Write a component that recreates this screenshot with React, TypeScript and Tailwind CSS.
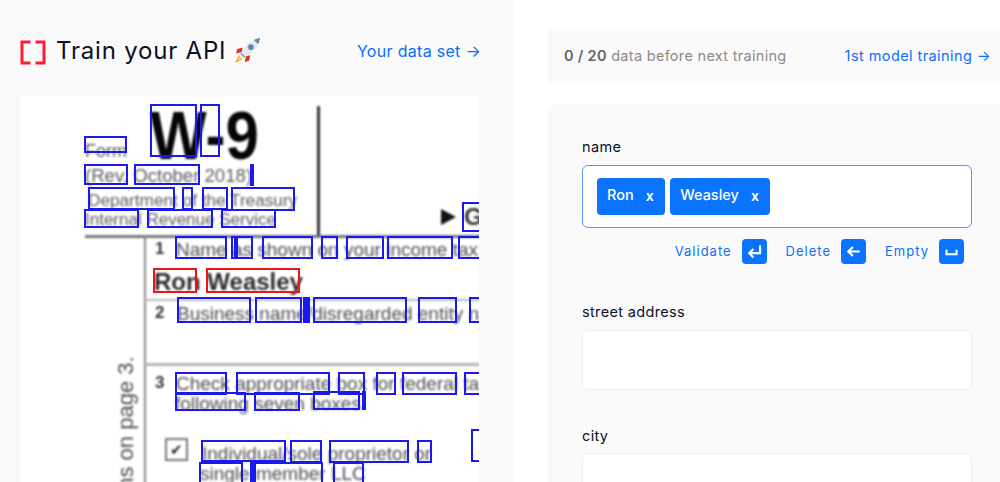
import React from "react";

const OX = 20;
const OY = 96;
const blue: number[][] = [
  [150,104,197,157],[200,104,220,157],[84,136,127,153],[84,164,128,185],[134,164,200,185],[250,164,252,186],
  [88,187,175,210],[182,187,193,210],[202,187,228,210],[231,187,295,211],
  [84,209,139,228],[147,209,213,228],[221,209,276,228],[462,202,482,232],
  [175,236,227,259],[231,236,236,259],[236,236,253,259],[262,236,313,259],[321,236,338,259],[346,236,384,259],[387,236,453,259],[458,236,482,259],
  [177,297,251,323],[255,297,302,323],[303,297,305,323],[306,297,309,323],[313,297,407,323],[418,297,457,323],[469,297,482,323],
  [175,372,227,395],[236,372,330,395],[338,372,365,395],[376,372,396,395],[402,372,457,395],[464,372,482,395],
  [175,392,246,411],[254,392,300,411],[313,391,360,410],[362,391,364,410],
  [201,440,286,462],[290,440,322,463],[329,440,409,463],[417,440,432,463],[471,429,482,462],
  [199,462,243,490],[250,462,254,490],[254,462,323,490],[333,462,364,490],
];
const red: number[][] = [[153,268,197,293],[206,268,300,293]];

const lines: { t: string; x: number; y: number; s: number; c: string; b?: boolean }[] = [
  { t: "Form", x: 85, y: 142, s: 18, c: "#5c5c5c" },
  { t: "(Rev. October 2018)", x: 85, y: 167, s: 18.6, c: "#5c5c5c" },
  { t: "Department of the Treasury", x: 88, y: 192, s: 17.2, c: "#5c5c5c" },
  { t: "Internal Revenue Service", x: 85, y: 211, s: 17, c: "#5c5c5c" },
  { t: "G", x: 464, y: 205, s: 24, c: "#333", b: true },
  { t: "1", x: 155, y: 240, s: 17, c: "#333", b: true },
  { t: "Name as shown on your income tax", x: 176, y: 240, s: 19, c: "#4f4f4f" },
  { t: "Ron Weasley", x: 154, y: 270, s: 24, c: "#2b2b2b", b: true },
  { t: "2", x: 155, y: 304, s: 17, c: "#333", b: true },
  { t: "Business name/disregarded entity name", x: 177, y: 304, s: 19, c: "#4f4f4f" },
  { t: "3", x: 155, y: 374, s: 17, c: "#333", b: true },
  { t: "Check appropriate box for federal tax", x: 176, y: 374, s: 19, c: "#4f4f4f" },
  { t: "following seven boxes.", x: 175, y: 394, s: 19, c: "#4f4f4f" },
  { t: "Individual/sole proprietor or", x: 202, y: 444, s: 19, c: "#4f4f4f" },
  { t: "single-member LLC", x: 200, y: 464, s: 19, c: "#4f4f4f" },
];

const rules: { x: number; y: number; w: number; h: number; c: string }[] = [
  { x: 317, y: 106, w: 3, h: 130, c: "#333" },
  { x: 85, y: 235, w: 397, h: 3, c: "#777" },
  { x: 144, y: 236, w: 2, h: 250, c: "#888" },
  { x: 145, y: 299, w: 340, h: 2, c: "#bbb" },
  { x: 145, y: 363, w: 340, h: 3, c: "#b5b5b5" },
];

function Rocket() {
  return (
    <svg width="27" height="27" viewBox="0 0 28 28" className="-mt-[1px] shrink-0">
      <path d="M5 19 L1 27 L9 23 Z" fill="#f6a623" />
      <path d="M6 20 L3.6 24.6 L8 22.4 Z" fill="#ffe25a" />
      <path d="M9 11 L3.5 12.5 L2 17 L8 15.5 Z" fill="#d9332f" />
      <path d="M17 19 L15.5 24.5 L11 26 L12.5 20 Z" fill="#d9332f" />
      <path d="M7.5 16 L12 20.5 C18 17 23 12.5 25 7.5 L20.5 3 C15.5 5 11 10 7.5 16 Z" fill="#e6eaee" />
      <path d="M20.5 3 L25 7.5 C26.4 4.4 27 2.4 27 1 C25.6 1 23.6 1.6 20.5 3 Z" fill="#6f8ba0" />
      <circle cx="17.5" cy="10.5" r="3" fill="#4f86b8" stroke="#a8b5bf" strokeWidth="1" />
      <path d="M7.5 16 L12 20.5 L10.5 21.5 L6.5 17.5 Z" fill="#8d99a3" />
    </svg>
  );
}

function Logo() {
  return (
    <svg width="26" height="25" viewBox="0 0 26 25" className="mt-[3px] shrink-0">
      <path d="M10.5 2 H2 V23 H10.5 M15.5 2 H24 V23 H15.5" fill="none" stroke="#ff1a35" strokeWidth="3" />
    </svg>
  );
}

function Doc() {
  return (
    <div className="relative flex-1 overflow-hidden bg-white font-['Liberation_Sans',sans-serif]">
      <div className="absolute inset-0 blur-[0.9px]">
        {rules.map((r, i) => (
          <div key={i} className="absolute" style={{ left: r.x - OX, top: r.y - OY, width: r.w, height: r.h, background: r.c }} />
        ))}
        <div className="absolute left-[130px] top-[5px] origin-top scale-y-[1.15] whitespace-nowrap text-[60px] font-bold leading-none text-[#050505]">
          W-9
        </div>
        {lines.map((l, i) => (
          <div
            key={i}
            className={`absolute whitespace-nowrap leading-none ${l.b ? "font-bold" : "font-normal"}`}
            style={{ left: l.x - OX, top: l.y - OY, fontSize: l.s, color: l.c }}
          >
            {l.t}
          </div>
        ))}
        <div className="absolute left-[145px] top-[342px] h-[23px] w-[23px] border-2 border-[#777] text-center text-[15px] leading-[19px] text-[#222]">
          ✔
        </div>
        <div className="absolute left-[95px] top-[483px] origin-top-left whitespace-nowrap text-[22px] leading-none text-[#4f4f4f]" style={{ transform: "rotate(-90deg)" }}>
          Instructions on page 3.
        </div>
        <div className="absolute left-[421px] top-[113px] h-0 w-0 border-y-[8px] border-l-[15px] border-y-transparent border-l-[#111]" />
      </div>
      {blue.map((b, i) => (
        <div key={i} className="absolute border-2 border-[#1a1aee]" style={{ left: b[0] - OX, top: b[1] - OY, width: b[2] - b[0], height: b[3] - b[1] }} />
      ))}
      {red.map((b, i) => (
        <div key={i} className="absolute border-2 border-[#f01313]" style={{ left: b[0] - OX, top: b[1] - OY, width: b[2] - b[0], height: b[3] - b[1] }} />
      ))}
    </div>
  );
}

function Tag({ label }: { label: string }) {
  return (
    <div className="flex h-[37px] items-center gap-[12px] rounded-[4px] bg-[#0a74ff] pl-[10px] pr-[11.5px] text-[14.5px] font-medium text-white">
      <span className="-mt-[3px]">{label}</span>
      <span className="-mt-[1px] text-[14px] font-semibold leading-none">x</span>
    </div>
  );
}

function Key({ children }: { children: React.ReactNode }) {
  return (
    <div className="flex h-[25px] w-[25px] items-center justify-center rounded-[4px] bg-[#0a74ff]">
      <svg width="19" height="19" viewBox="0 0 17 17" fill="none" stroke="white" strokeWidth="1.9">
        {children}
      </svg>
    </div>
  );
}

function Hint({ label, children }: { label: string; children: React.ReactNode }) {
  return (
    <div className="flex items-center gap-[10px]">
      <span className="text-[13px] tracking-[1px] text-[#0a6fff]">{label}</span>
      <Key>{children}</Key>
    </div>
  );
}

export default function App() {
  return (
    <div className="flex h-[482px] w-[1000px] overflow-hidden bg-white font-['Inter',sans-serif]">
      <div className="flex w-[513px] shrink-0 flex-col bg-[#fafafa] pl-5 pr-[34px]">
        <div className="flex h-[96px] shrink-0 items-center justify-between pt-[5px]">
          <div className="flex items-center gap-[8px]">
            <Logo />
            <span className="ml-[2px] text-[24px] font-normal tracking-[0.8px] text-[#0d0f26]">Train your API</span>
            <Rocket />
          </div>
          <span className="-mr-[2px] text-[16px] tracking-[0.3px] text-[#0a6fff]">Your data set →</span>
        </div>
        <Doc />
      </div>
      <div className="flex min-w-0 flex-1 flex-col overflow-hidden pl-[35px] pt-[29px]">
        <div className="flex h-[54px] shrink-0 items-center justify-between bg-[#fafafa] pl-4 pr-[9px]">
          <span className="text-[14.5px] tracking-[0.3px] text-[#8a8a8a]">
            <span className="font-semibold text-[#666]">0 / 20</span> data before next training
          </span>
          <span className="text-[14.5px] tracking-[0.42px] text-[#0a6fff]">1st model training →</span>
        </div>
        <div className="mt-[21px] flex-1 rounded-tl-[8px] bg-[#fafafa] pl-[34px] pr-[28px] pt-[34px]">
          <div className="text-[14.5px] leading-[18px] tracking-[0.35px] text-[#0d0f26]">name</div>
          <div className="mt-[9px] flex h-[63px] items-center gap-[5px] rounded-[6px] border border-[#5b93ff] bg-white pl-[14px]">
            <Tag label="Ron" />
            <Tag label="Weasley" />
          </div>
          <div className="mt-[11px] flex justify-end gap-[19px] pr-[8px]">
            <Hint label="Validate">
              <path d="M13.5 3 V10 H4" />
              <path d="M7.5 6.2 L3.8 10 L7.5 13.8" />
            </Hint>
            <Hint label="Delete">
              <path d="M14 8.5 H4" />
              <path d="M8 4.5 L3.8 8.5 L8 12.5" />
            </Hint>
            <Hint label="Empty">
              <path d="M4 7 V11 H13 V7" />
            </Hint>
          </div>
          <div className="mt-[39px] text-[14.5px] leading-[18px] tracking-[0.35px] text-[#0d0f26]">street address</div>
          <div className="mt-[9px] h-[60px] rounded-[6px] border border-[#eeeef2] bg-white" />
          <div className="mt-[37px] text-[14.5px] leading-[18px] tracking-[0.35px] text-[#0d0f26]">city</div>
          <div className="mt-[8px] h-[61px] rounded-[6px] border border-[#eeeef2] bg-white" />
        </div>
      </div>
    </div>
  );
}
